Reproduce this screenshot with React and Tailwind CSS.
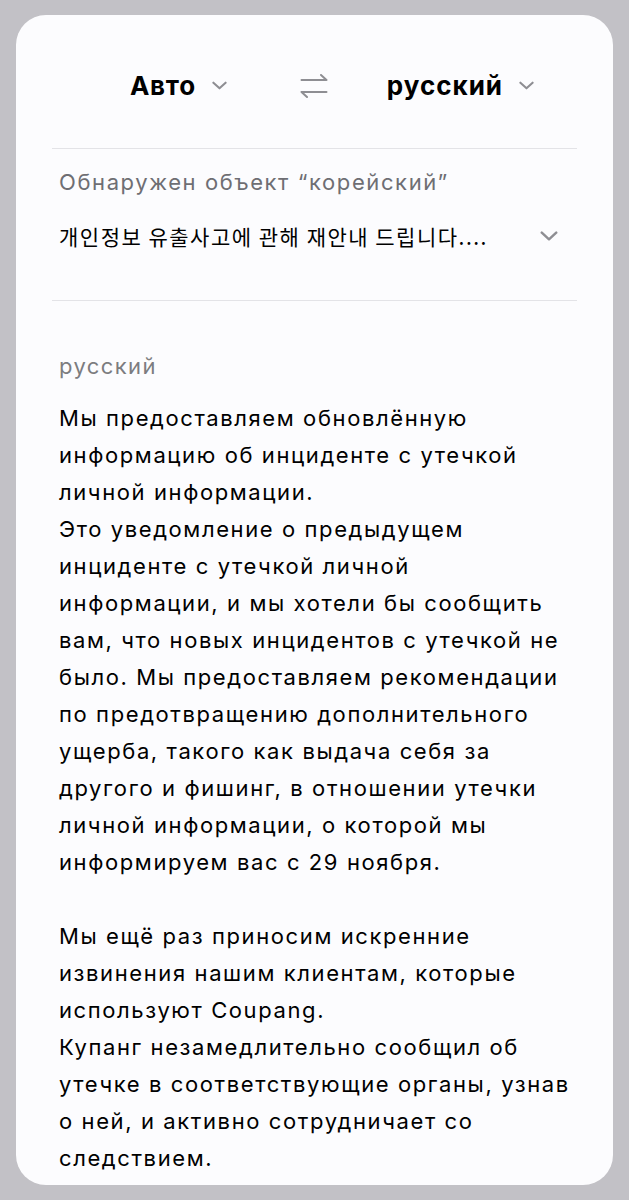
import React from "react";

const Chevron = ({ className }) => (
  <svg viewBox="0 0 16 9" className={className} fill="none" stroke="currentColor" strokeWidth="2.2" strokeLinecap="round" strokeLinejoin="round">
    <path d="M1.5 1.5l6.5 6 6.5-6" />
  </svg>
);

const SwapIcon = () => (
  <svg viewBox="0 0 28 24" className="w-[28px] h-[24px] text-[#8e8e93]" fill="none" stroke="currentColor" strokeWidth="2" strokeLinecap="round" strokeLinejoin="round">
    <path d="M1.5 6h25M21 1l5.5 5" />
    <path d="M26.5 18h-25M7 23l-5.5-5" />
  </svg>
);

// line breaks follow the app's own wrapping
const paragraphs = [
  [
    ["Мы предоставляем обновлённую", "информацию об инциденте с утечкой", "личной информации."],
    [
      "Это уведомление о предыдущем",
      "инциденте с утечкой личной",
      "информации, и мы хотели бы сообщить",
      "вам, что новых инцидентов с утечкой не",
      "было. Мы предоставляем рекомендации",
      "по предотвращению дополнительного",
      "ущерба, такого как выдача себя за",
      "другого и фишинг, в отношении утечки",
      "личной информации, о которой мы",
      "информируем вас с 29 ноября.",
    ],
  ],
  [
    ["Мы ещё раз приносим искренние", "извинения нашим клиентам, которые", "используют Coupang."],
    [
      "Купанг незамедлительно сообщил об",
      "утечке в соответствующие органы, узнав",
      "о ней, и активно сотрудничает со",
      "следствием.",
    ],
  ],
];

export default function App() {
  return (
    <div className="min-h-screen bg-[#c2c1c6] pt-[15px] px-[16px] font-['Inter','Noto_Sans','Noto_Sans_CJK_KR',sans-serif]">
      <div className="h-[1170px] overflow-hidden rounded-[30px] bg-[#fcfcfe] px-[36px]">
        {/* Language bar */}
        <div className="flex h-[134px] items-center border-b border-[#e3e3e7] pt-[8px]">
          <div className="ml-[78px] flex items-center">
            <span className="text-[26px] font-bold tracking-[0.7px] text-black">Авто</span>
            <Chevron className="ml-[16px] w-[15px] h-[9px] text-[#8e8e93]" />
          </div>
          <div className="ml-[73px]">
            <SwapIcon />
          </div>
          <div className="ml-[59px] flex items-center">
            <span className="text-[26px] font-bold tracking-[1px] text-black">русский</span>
            <Chevron className="ml-[16px] w-[15px] h-[9px] text-[#8e8e93]" />
          </div>
        </div>

        {/* Source */}
        <div className="border-b border-[#e3e3e7] pl-[7px] pt-[18px] pb-[49px]">
          <div className="text-[22px] leading-[30px] tracking-[1.6px] text-[#6e6e73]">Обнаружен объект “корейский”</div>
          <div className="mt-[24px] flex items-center justify-between pr-[19px]">
            <span className="font-['Noto_Sans_CJK_KR','Noto_Sans',sans-serif] text-[21px] leading-[30px] tracking-[1.5px] text-black">
              개인정보 유출사고에 관해 재안내 드립니다....
            </span>
            <Chevron className="w-[18px] h-[10px] text-[#8e8e93]" />
          </div>
        </div>

        {/* Translation */}
        <div className="pl-[7px] pt-[50px]">
          <div className="text-[22px] leading-[30px] tracking-[1.4px] text-[#7c7c80]">русский</div>
          <div className="mt-[19px] whitespace-nowrap text-[22px] leading-[37px] tracking-[1.6px] text-black">
            {paragraphs.map((p, i) => (
              <div key={i} className={i > 0 ? "mt-[37px]" : ""}>
                {p.map((lines, j) => (
                  <p key={j}>
                    {lines.map((l, k) => (
                      <React.Fragment key={k}>
                        {k > 0 && <br />}
                        {l}
                      </React.Fragment>
                    ))}
                  </p>
                ))}
              </div>
            ))}
          </div>
        </div>
      </div>
    </div>
  );
}
